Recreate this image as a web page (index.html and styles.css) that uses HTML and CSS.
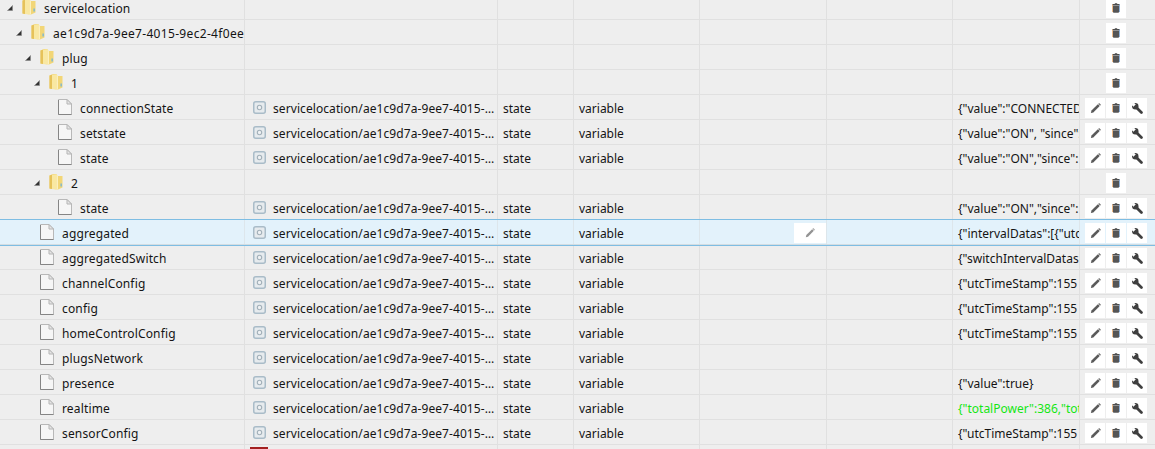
FILE: index.html
```html
<!DOCTYPE html>
<html lang="en">
<head>
<meta charset="utf-8">
<title>Objects</title>
<link rel="stylesheet" href="styles.css">
</head>
<body>
<svg class="defs" width="0" height="0" aria-hidden="true">
  <symbol id="i-arrow" viewBox="0 0 6 6"><path d="M5.5 0.5V5.5H0.5Z" fill="#333" stroke="#888" stroke-width=".6"/></symbol>
  <symbol id="i-folder" viewBox="0 0 14 16"><path d="M.5 1.500 4 0H7.500L8.500 2H13.500V13.500L9 15.500 .5 14.500Z" fill="#f2d677"/><path d="M.5 1.500 3 .8V15L.5 14.500Z" fill="#e6c25a"/><path d="M3 .8 7.500 .3V15.500L3 15Z" fill="#f9e8a2"/><path d="M7.500 .3 9 2V15.500H7.500Z" fill="#fbf0bf"/><path d="M11.500 9.500h1.300v3H11.500Z" fill="#6fb4dc"/></symbol>
  <symbol id="i-file" viewBox="0 0 14 16"><path d="M.5.5H9L13.500 5V15.500H.5Z" fill="#f6f6f6" stroke="#b8b8b8"/><path d="M9 .5V5H13.500Z" fill="#e6e6e6" stroke="#b4b4b4"/><path d="M.5 1V15.500H13.500" fill="none" stroke="#858585"/></symbol>
  <symbol id="i-topic" viewBox="0 0 13 13"><rect x=".75" y=".75" width="11.500" height="11.500" rx="2" fill="#e6ebee" stroke="#a9bcc8" stroke-width="1.500"/><circle cx="6.500" cy="6.500" r="2.200" fill="#eef1f3" stroke="#a2b0b9" stroke-width="1.100"/></symbol>
  <symbol id="i-pencil" viewBox="0 0 12 12"><path d="M1 11 1.600 8.300 8.600 1.400 10.600 3.400 3.600 10.400Z" fill="#5a5a5a"/><path d="M8.900 1 10 0 12 2 11 3.100Z" fill="#777"/></symbol>
  <symbol id="i-trash" viewBox="0 0 10 12"><path d="M3.500 0H6.500V1H9.500V2.500H.5V1H3.500Z" fill="#4d4d4d"/><path d="M1 3H9V11L8 12H2L1 11Z" fill="#555"/><path d="M0 1.500H1V11H0Z" fill="#f0b070"/><path d="M9 1.500H10V11H9Z" fill="#7aa6d6"/></symbol>
  <symbol id="i-wrench" viewBox="0 0 12 12"><circle cx="3.600" cy="3.600" r="3.500" fill="#3f3f3f"/><path d="M-.5 1.900 1.900-.5 4.100 1.700 1.700 4.100Z" fill="#fff"/><path d="M4 4 10.300 10.300" stroke="#3f3f3f" stroke-width="3" stroke-linecap="round"/></symbol>
</svg>
<main class="tree">

<div class="row">
  <div class="cell name l0"><svg class="arrow"><use href="#i-arrow"/></svg><svg class="ico"><use href="#i-folder"/></svg><span>servicelocation</span></div>
  <div class="cell topic"></div><div class="cell type"></div><div class="cell role"></div><div class="cell extra"></div><div class="cell extra2"></div><div class="cell value"></div>
  <div class="cell acts only"><b class="btn"><svg class="g-t"><use href="#i-trash"/></svg></b></div>
</div>
<div class="row">
  <div class="cell name l1"><svg class="arrow"><use href="#i-arrow"/></svg><svg class="ico"><use href="#i-folder"/></svg><span>ae1c9d7a-9ee7-4015-9ec2-4f0ee</span></div>
  <div class="cell topic"></div><div class="cell type"></div><div class="cell role"></div><div class="cell extra"></div><div class="cell extra2"></div><div class="cell value"></div>
  <div class="cell acts only"><b class="btn"><svg class="g-t"><use href="#i-trash"/></svg></b></div>
</div>
<div class="row">
  <div class="cell name l2"><svg class="arrow"><use href="#i-arrow"/></svg><svg class="ico"><use href="#i-folder"/></svg><span>plug</span></div>
  <div class="cell topic"></div><div class="cell type"></div><div class="cell role"></div><div class="cell extra"></div><div class="cell extra2"></div><div class="cell value"></div>
  <div class="cell acts only"><b class="btn"><svg class="g-t"><use href="#i-trash"/></svg></b></div>
</div>
<div class="row">
  <div class="cell name l3"><svg class="arrow"><use href="#i-arrow"/></svg><svg class="ico"><use href="#i-folder"/></svg><span>1</span></div>
  <div class="cell topic"></div><div class="cell type"></div><div class="cell role"></div><div class="cell extra"></div><div class="cell extra2"></div><div class="cell value"></div>
  <div class="cell acts only"><b class="btn"><svg class="g-t"><use href="#i-trash"/></svg></b></div>
</div>
<div class="row">
  <div class="cell name l4"><svg class="ico"><use href="#i-file"/></svg><span>connectionState</span></div>
  <div class="cell topic"><svg class="ticon"><use href="#i-topic"/></svg><span>servicelocation/ae1c9d7a-9ee7-4015-9ec2-4f0ee/plug/1/connectionState</span></div><div class="cell type">state</div><div class="cell role">variable</div><div class="cell extra"></div><div class="cell extra2"></div><div class="cell value">{"value":"CONNECTED","since":1}</div>
  <div class="cell acts"><b class="btn"><svg class="g-p"><use href="#i-pencil"/></svg></b><b class="btn"><svg class="g-t"><use href="#i-trash"/></svg></b><b class="btn"><svg class="g-w"><use href="#i-wrench"/></svg></b></div>
</div>
<div class="row">
  <div class="cell name l4"><svg class="ico"><use href="#i-file"/></svg><span>setstate</span></div>
  <div class="cell topic"><svg class="ticon"><use href="#i-topic"/></svg><span>servicelocation/ae1c9d7a-9ee7-4015-9ec2-4f0ee/plug/1/setstate</span></div><div class="cell type">state</div><div class="cell role">variable</div><div class="cell extra"></div><div class="cell extra2"></div><div class="cell value">{"value":"ON", "since":155}</div>
  <div class="cell acts"><b class="btn"><svg class="g-p"><use href="#i-pencil"/></svg></b><b class="btn"><svg class="g-t"><use href="#i-trash"/></svg></b><b class="btn"><svg class="g-w"><use href="#i-wrench"/></svg></b></div>
</div>
<div class="row">
  <div class="cell name l4"><svg class="ico"><use href="#i-file"/></svg><span>state</span></div>
  <div class="cell topic"><svg class="ticon"><use href="#i-topic"/></svg><span>servicelocation/ae1c9d7a-9ee7-4015-9ec2-4f0ee/plug/1/state</span></div><div class="cell type">state</div><div class="cell role">variable</div><div class="cell extra"></div><div class="cell extra2"></div><div class="cell value">{"value":"ON","since":155}</div>
  <div class="cell acts"><b class="btn"><svg class="g-p"><use href="#i-pencil"/></svg></b><b class="btn"><svg class="g-t"><use href="#i-trash"/></svg></b><b class="btn"><svg class="g-w"><use href="#i-wrench"/></svg></b></div>
</div>
<div class="row">
  <div class="cell name l3"><svg class="arrow"><use href="#i-arrow"/></svg><svg class="ico"><use href="#i-folder"/></svg><span>2</span></div>
  <div class="cell topic"></div><div class="cell type"></div><div class="cell role"></div><div class="cell extra"></div><div class="cell extra2"></div><div class="cell value"></div>
  <div class="cell acts only"><b class="btn"><svg class="g-t"><use href="#i-trash"/></svg></b></div>
</div>
<div class="row">
  <div class="cell name l4"><svg class="ico"><use href="#i-file"/></svg><span>state</span></div>
  <div class="cell topic"><svg class="ticon"><use href="#i-topic"/></svg><span>servicelocation/ae1c9d7a-9ee7-4015-9ec2-4f0ee/plug/2/state</span></div><div class="cell type">state</div><div class="cell role">variable</div><div class="cell extra"></div><div class="cell extra2"></div><div class="cell value">{"value":"ON","since":155}</div>
  <div class="cell acts"><b class="btn"><svg class="g-p"><use href="#i-pencil"/></svg></b><b class="btn"><svg class="g-t"><use href="#i-trash"/></svg></b><b class="btn"><svg class="g-w"><use href="#i-wrench"/></svg></b></div>
</div>
<div class="row selected">
  <div class="cell name l2"><svg class="ico"><use href="#i-file"/></svg><span>aggregated</span></div>
  <div class="cell topic"><svg class="ticon"><use href="#i-topic"/></svg><span>servicelocation/ae1c9d7a-9ee7-4015-9ec2-4f0ee/aggregated</span></div><div class="cell type">state</div><div class="cell role">variable</div><div class="cell extra"><b class="edit"><svg class="g-e"><use href="#i-pencil"/></svg></b></div><div class="cell extra2"></div><div class="cell value">{"intervalDatas":[{"utcTimeStamp":155}]}</div>
  <div class="cell acts"><b class="btn"><svg class="g-p"><use href="#i-pencil"/></svg></b><b class="btn"><svg class="g-t"><use href="#i-trash"/></svg></b><b class="btn"><svg class="g-w"><use href="#i-wrench"/></svg></b></div>
</div>
<div class="row">
  <div class="cell name l2"><svg class="ico"><use href="#i-file"/></svg><span>aggregatedSwitch</span></div>
  <div class="cell topic"><svg class="ticon"><use href="#i-topic"/></svg><span>servicelocation/ae1c9d7a-9ee7-4015-9ec2-4f0ee/aggregatedSwitch</span></div><div class="cell type">state</div><div class="cell role">variable</div><div class="cell extra"></div><div class="cell extra2"></div><div class="cell value">{"switchIntervalDatas":[{}]}</div>
  <div class="cell acts"><b class="btn"><svg class="g-p"><use href="#i-pencil"/></svg></b><b class="btn"><svg class="g-t"><use href="#i-trash"/></svg></b><b class="btn"><svg class="g-w"><use href="#i-wrench"/></svg></b></div>
</div>
<div class="row">
  <div class="cell name l2"><svg class="ico"><use href="#i-file"/></svg><span>channelConfig</span></div>
  <div class="cell topic"><svg class="ticon"><use href="#i-topic"/></svg><span>servicelocation/ae1c9d7a-9ee7-4015-9ec2-4f0ee/channelConfig</span></div><div class="cell type">state</div><div class="cell role">variable</div><div class="cell extra"></div><div class="cell extra2"></div><div class="cell value">{"utcTimeStamp":155</div>
  <div class="cell acts"><b class="btn"><svg class="g-p"><use href="#i-pencil"/></svg></b><b class="btn"><svg class="g-t"><use href="#i-trash"/></svg></b><b class="btn"><svg class="g-w"><use href="#i-wrench"/></svg></b></div>
</div>
<div class="row">
  <div class="cell name l2"><svg class="ico"><use href="#i-file"/></svg><span>config</span></div>
  <div class="cell topic"><svg class="ticon"><use href="#i-topic"/></svg><span>servicelocation/ae1c9d7a-9ee7-4015-9ec2-4f0ee/config</span></div><div class="cell type">state</div><div class="cell role">variable</div><div class="cell extra"></div><div class="cell extra2"></div><div class="cell value">{"utcTimeStamp":155</div>
  <div class="cell acts"><b class="btn"><svg class="g-p"><use href="#i-pencil"/></svg></b><b class="btn"><svg class="g-t"><use href="#i-trash"/></svg></b><b class="btn"><svg class="g-w"><use href="#i-wrench"/></svg></b></div>
</div>
<div class="row">
  <div class="cell name l2"><svg class="ico"><use href="#i-file"/></svg><span>homeControlConfig</span></div>
  <div class="cell topic"><svg class="ticon"><use href="#i-topic"/></svg><span>servicelocation/ae1c9d7a-9ee7-4015-9ec2-4f0ee/homeControlConfig</span></div><div class="cell type">state</div><div class="cell role">variable</div><div class="cell extra"></div><div class="cell extra2"></div><div class="cell value">{"utcTimeStamp":155</div>
  <div class="cell acts"><b class="btn"><svg class="g-p"><use href="#i-pencil"/></svg></b><b class="btn"><svg class="g-t"><use href="#i-trash"/></svg></b><b class="btn"><svg class="g-w"><use href="#i-wrench"/></svg></b></div>
</div>
<div class="row">
  <div class="cell name l2"><svg class="ico"><use href="#i-file"/></svg><span>plugsNetwork</span></div>
  <div class="cell topic"><svg class="ticon"><use href="#i-topic"/></svg><span>servicelocation/ae1c9d7a-9ee7-4015-9ec2-4f0ee/plugsNetwork</span></div><div class="cell type">state</div><div class="cell role">variable</div><div class="cell extra"></div><div class="cell extra2"></div><div class="cell value"></div>
  <div class="cell acts"><b class="btn"><svg class="g-p"><use href="#i-pencil"/></svg></b><b class="btn"><svg class="g-t"><use href="#i-trash"/></svg></b><b class="btn"><svg class="g-w"><use href="#i-wrench"/></svg></b></div>
</div>
<div class="row">
  <div class="cell name l2"><svg class="ico"><use href="#i-file"/></svg><span>presence</span></div>
  <div class="cell topic"><svg class="ticon"><use href="#i-topic"/></svg><span>servicelocation/ae1c9d7a-9ee7-4015-9ec2-4f0ee/presence</span></div><div class="cell type">state</div><div class="cell role">variable</div><div class="cell extra"></div><div class="cell extra2"></div><div class="cell value">{"value":true}</div>
  <div class="cell acts"><b class="btn"><svg class="g-p"><use href="#i-pencil"/></svg></b><b class="btn"><svg class="g-t"><use href="#i-trash"/></svg></b><b class="btn"><svg class="g-w"><use href="#i-wrench"/></svg></b></div>
</div>
<div class="row">
  <div class="cell name l2"><svg class="ico"><use href="#i-file"/></svg><span>realtime</span></div>
  <div class="cell topic"><svg class="ticon"><use href="#i-topic"/></svg><span>servicelocation/ae1c9d7a-9ee7-4015-9ec2-4f0ee/realtime</span></div><div class="cell type">state</div><div class="cell role">variable</div><div class="cell extra"></div><div class="cell extra2"></div><div class="cell value live">{"totalPower":386,"totalReactive":1}</div>
  <div class="cell acts"><b class="btn"><svg class="g-p"><use href="#i-pencil"/></svg></b><b class="btn"><svg class="g-t"><use href="#i-trash"/></svg></b><b class="btn"><svg class="g-w"><use href="#i-wrench"/></svg></b></div>
</div>
<div class="row">
  <div class="cell name l2"><svg class="ico"><use href="#i-file"/></svg><span>sensorConfig</span></div>
  <div class="cell topic"><svg class="ticon"><use href="#i-topic"/></svg><span>servicelocation/ae1c9d7a-9ee7-4015-9ec2-4f0ee/sensorConfig</span></div><div class="cell type">state</div><div class="cell role">variable</div><div class="cell extra"></div><div class="cell extra2"></div><div class="cell value">{"utcTimeStamp":155</div>
  <div class="cell acts"><b class="btn"><svg class="g-p"><use href="#i-pencil"/></svg></b><b class="btn"><svg class="g-t"><use href="#i-trash"/></svg></b><b class="btn"><svg class="g-w"><use href="#i-wrench"/></svg></b></div>
</div>
<div class="row">
  <div class="cell name"></div>
  <div class="cell topic"><i class="flag"></i></div><div class="cell type"></div><div class="cell role"></div><div class="cell extra"></div><div class="cell extra2"></div><div class="cell value"></div><div class="cell acts"></div>
</div>

</main>
</body>
</html>
```
FILE: styles.css
```css
html, body {
  margin: 0;
  padding: 0;
  height: 449px;
  overflow: hidden;
  background: #eeeeee;
}

.defs {
  display: block;
  height: 0;
}

.tree {
  margin-top: -5px;
  font-family: "Noto Sans", "DejaVu Sans", sans-serif;
  font-size: 12px;
  color: #141414;
}

.row {
  display: grid;
  grid-template-columns: 245px 253px 76px 126px 127px 126px 127px 75px;
  height: 25px;
  box-sizing: border-box;
  border-bottom: 1px solid #e0e0e0;
  background: #eeeeee;
}

.row.selected {
  position: relative;
  height: 26px;
  margin-top: -1px;
  background: #e3f2fb;
  border-top: 1px solid #7ebde3;
  border-bottom: 1px solid #d4dde2;
  box-shadow: 0 1px 0 #7ebde3;
}

.cell {
  display: flex;
  align-items: center;
  min-width: 0;
  padding-top: 2px;
  overflow: hidden;
  white-space: nowrap;
  border-right: 1px solid #e0e0e0;
  box-sizing: border-box;
}

.row.selected .cell {
  border-right-color: #dde6eb;
}

.name {
  letter-spacing: 0.15px;
}

.l0 { padding-left: 7px; }
.l1 { padding-left: 16px; letter-spacing: 0.32px; }
.l2 { padding-left: 25px; }
.l3 { padding-left: 34px; }
.l4 { padding-left: 43px; }

.name .arrow {
  width: 6px;
  height: 6px;
  margin-right: 9px;
  flex: none;
}

.name .ico {
  width: 14px;
  height: 16px;
  margin-top: -2px;
  margin-right: 8px;
  flex: none;
}

/* leaves have no arrow: the icon sits in the arrow's slot plus its gap */
.l4 > .ico:first-child,
.l2 > .ico:first-child {
  margin-left: 15px;
}

.topic {
  padding-left: 8px;
  letter-spacing: 0.08px;
}

.ticon {
  width: 13px;
  height: 13px;
  margin-top: -2px;
  margin-right: 7px;
  flex: none;
}

.topic span {
  overflow: hidden;
  text-overflow: ellipsis;
}

.type { padding-left: 5px; }
.role { padding-left: 5px; }

.extra {
  justify-content: flex-end;
}

.edit {
  display: flex;
  align-items: center;
  justify-content: center;
  width: 32px;
  height: 20px;
  background: #ffffff;
}

.g-e {
  width: 10px;
  height: 10px;
  opacity: 0.65;
}

.value {
  padding-left: 5px;
}

.value.live {
  color: #14e614;
}

.acts {
  border-right: 0;
  padding-left: 5px;
  gap: 1px;
}

.acts.only {
  padding-left: 26px;
}

.btn {
  display: flex;
  align-items: center;
  justify-content: center;
  width: 20px;
  height: 20px;
  background: #ffffff;
}

.g-p, .g-w {
  width: 11px;
  height: 11px;
}

.g-t {
  width: 8px;
  height: 10px;
}

.flag {
  display: block;
  align-self: flex-start;
  margin-left: -3px;
  width: 18px;
  height: 2px;
  background: #a32020;
}
```
